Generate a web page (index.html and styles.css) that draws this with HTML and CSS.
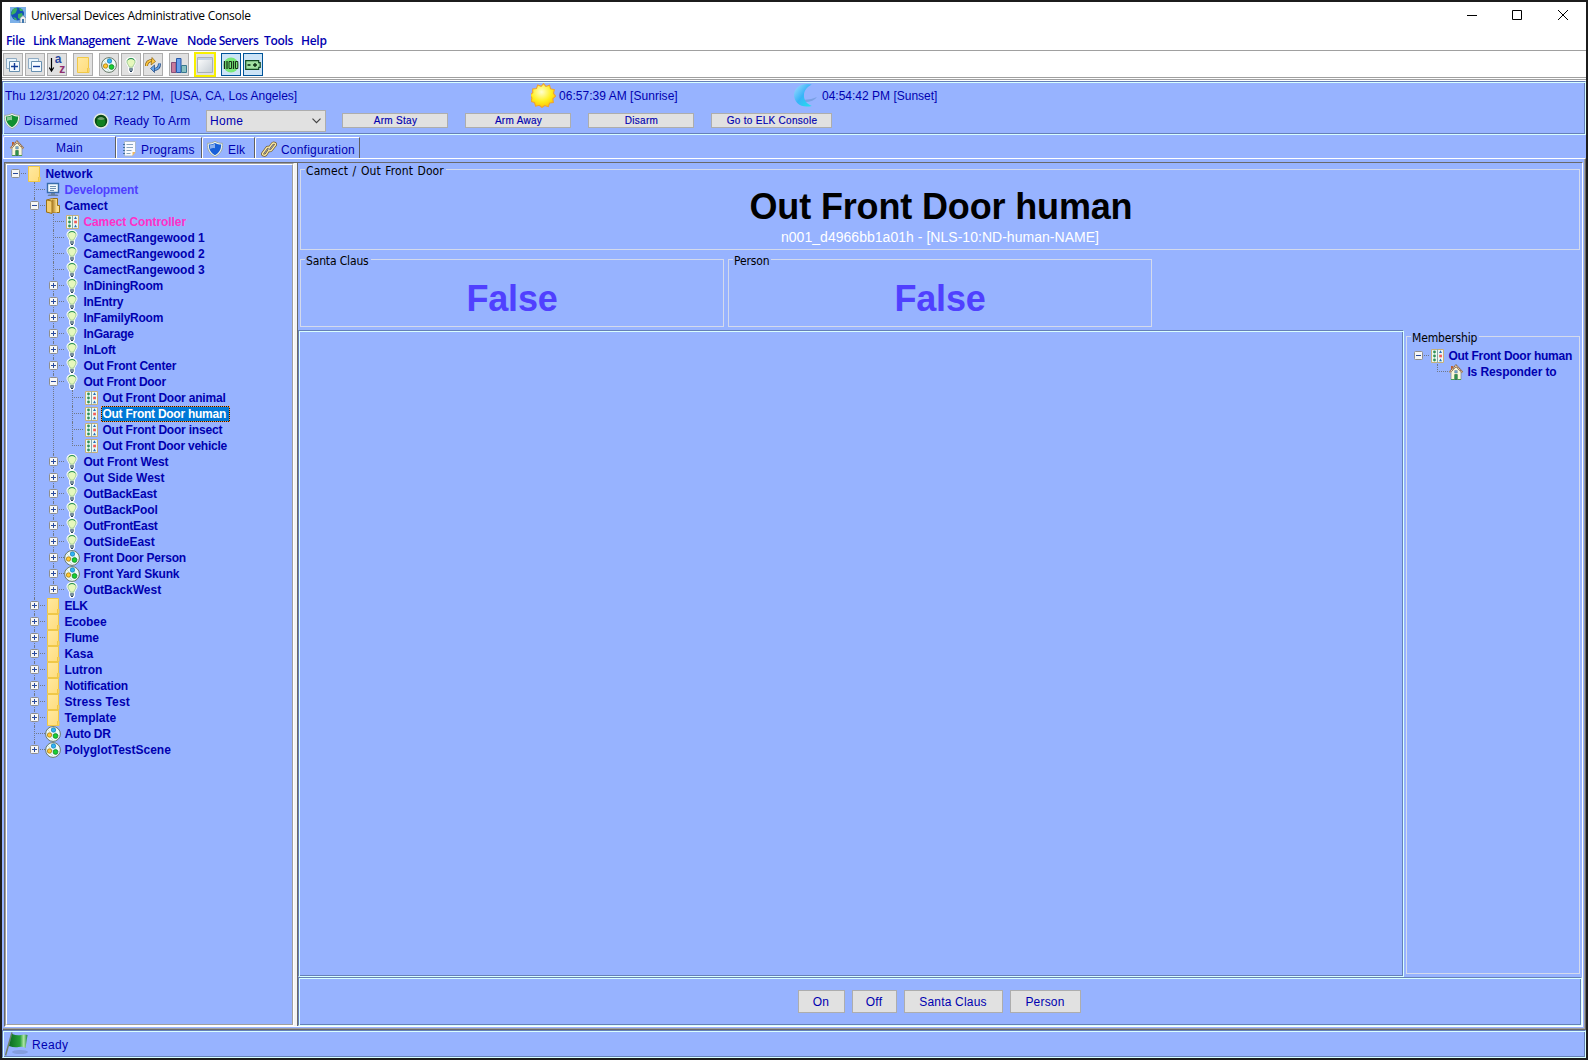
FILE: index.html
```html
<!DOCTYPE html>
<html lang="en">
<head>
<meta charset="utf-8">
<title>Universal Devices Administrative Console</title>
<link rel="stylesheet" href="styles.css">
</head>
<body>
<svg class="defs" aria-hidden="true">
  <defs>
    <linearGradient id="gFolder" x1="0" y1="0" x2="1" y2="1"><stop offset="0" stop-color="#ffe9a0"/><stop offset="1" stop-color="#ffdc7c"/></linearGradient>
    <linearGradient id="gOpen" x1="0" x2="1"><stop offset="0" stop-color="#a87820"/><stop offset="1" stop-color="#ffe494"/></linearGradient>
    <radialGradient id="gSun" cx=".45" cy=".35" r=".65"><stop offset="0" stop-color="#ffffd0"/><stop offset=".6" stop-color="#fff020"/><stop offset="1" stop-color="#ffc400"/></radialGradient>
    <linearGradient id="gMoon" x1="0" y1="0" x2="1" y2="1"><stop offset="0" stop-color="#a8dcff"/><stop offset=".5" stop-color="#38b4f8"/><stop offset="1" stop-color="#20e4ec"/></linearGradient>
    <linearGradient id="gFlag" x1="0" x2="1"><stop offset="0" stop-color="#0c6c24"/><stop offset=".6" stop-color="#28a038"/><stop offset=".8" stop-color="#b0e8a8"/><stop offset="1" stop-color="#188030"/></linearGradient>
    <linearGradient id="gWin" x1="0" y1="0" x2="1" y2="1"><stop offset="0" stop-color="#fff"/><stop offset="1" stop-color="#c4ccd4"/></linearGradient>
  </defs>
  <symbol id="plus" viewBox="0 0 9 9"><rect x=".5" y=".5" width="8" height="8" rx="1" fill="#f6f6f6" stroke="#8e8e8e"/><path d="M2 4.500h5M4.500 2v5" stroke="#2a4a9c"/></symbol>
  <symbol id="minus" viewBox="0 0 9 9"><rect x=".5" y=".5" width="8" height="8" rx="1" fill="#f6f6f6" stroke="#8e8e8e"/><path d="M2 4.500h5" stroke="#2a4a9c"/></symbol>
  <symbol id="folder" viewBox="0 0 16 16"><path d="M2.500 .5h11v10.500h.5v4.500h-11.500z" fill="url(#gFolder)" stroke="#f0c848"/><path d="M12.500 11v4" stroke="#f0c848"/></symbol>
  <symbol id="openfolder" viewBox="0 0 16 16"><path d="M1.500 2l6-1.500h5v7h2v7h-7l-6-.5z" fill="#ffe08c" stroke="#987018"/><path d="M1.500 2l5.500 1v12.500l-5.500-1.500z" fill="#f4cc70" stroke="#987018"/><path d="M7 1.500h5v13h-5z" fill="url(#gOpen)"/></symbol>
  <symbol id="bulb" viewBox="0 0 16 16"><path d="M8 0c-3.400 0-5.500 2.100-5.500 4.800 0 2.200 2.200 3.500 2.600 5.700v3.500l1.300 2h3.200l1.300-2v-3.500c.4-2.200 2.600-3.500 2.600-5.700 0-2.700-2.100-4.800-5.500-4.800z" fill="#fff"/><path d="M8 1.300c-2.500 0-4.100 1.500-4.100 3.700 0 1.800 2 3.100 2.400 5.200h3.400c.4-2.100 2.400-3.400 2.400-5.200 0-2.200-1.600-3.700-4.100-3.700z" fill="#e6f8bc" stroke="#88ba88" stroke-width=".8"/><path d="M4.600 3.300c1.400-2.200 5.400-2.400 6.800 0" stroke="#209050" fill="none"/><path d="M6.500 11.500h3v2h-3z" fill="#7894a4" stroke="#587080" stroke-width=".7"/><path d="M7 14.500h2" stroke="#284060"/></symbol>
  <symbol id="scene" viewBox="0 0 16 16"><circle cx="8" cy="8" r="7.400" fill="#eefaf6" stroke="#687868"/><path d="M3 4l9 9M1 7l7 7M6 2l8 8" stroke="#b8d4d4" stroke-width=".7"/><circle cx="8.500" cy="4" r="2.200" fill="#30b4f4" stroke="#1078b8" stroke-width=".7"/><circle cx="4.500" cy="9" r="2.200" fill="#ffc830" stroke="#a87000" stroke-width=".7"/><circle cx="10.500" cy="10" r="2.400" fill="#18d030" stroke="#087820" stroke-width=".7"/></symbol>
  <symbol id="device" viewBox="0 0 16 16"><path d="M2.500 1.500h12v13h-12z" fill="#eefaf4" stroke="#c8b078"/><path d="M8.500 1v14" stroke="#8ca8a8"/><g fill="#309058"><circle cx="5.500" cy="4" r="1.400"/><circle cx="5.500" cy="8" r="1.400"/><circle cx="5.500" cy="12" r="1.400"/></g><path d="M10 5l1.500-2.700 1.500 2.700zM10 13.300l1.500-2.700 1.500 2.700z" fill="#2870b8"/><path d="M10.200 6.700h2.700v2.600h-2.700z" fill="#f05858"/></symbol>
  <symbol id="pc" viewBox="0 0 16 16"><path d="M2.500 1.500h11v9h-11z" fill="#f0f8fc" stroke="#386cac" stroke-width="1.400"/><path d="M5 4.500h6M5 6.500h6M5 8.500h4" stroke="#7090b0"/><path d="M6 11h4v1.500h2.500l1 1.500h-11l1-1.500h2.500z" fill="#6880a0"/></symbol>
  <symbol id="house" viewBox="0 0 16 16"><path d="M3 2h2v4h-2z" fill="#c06030"/><path d="M3 8l5-5 5 5v7.500h-10z" fill="#fbf8d8" stroke="#889098" stroke-width=".8"/><path d="M1.500 8.500l6.500-7 6.500 7" fill="none" stroke="#886850" stroke-width="1.900"/><path d="M1.700 8.500l6.300-6.700 6.300 6.700" fill="none" stroke="#f8dcb0" stroke-width="1.100" stroke-dasharray="1.200 .8"/><path d="M6.700 6.500h2.600v2.500h-2.600z" fill="#70a8d0" stroke="#688098" stroke-width=".5"/><path d="M6.700 10.500h2.600v5h-2.600z" fill="#309850" stroke="#206038" stroke-width=".6"/><path d="M3 15.500h3M10 15.500h3" stroke="#48a050"/></symbol>
  <symbol id="shield" viewBox="1 0 14 16" preserveAspectRatio="none"><path d="M8 .3c2 1.400 4.200 2 6.700 2 .3 6.200-1.700 10.500-6.700 13.400-5-2.900-7-7.200-6.700-13.400 2.500 0 4.700-.6 6.700-2z" fill="#f0f4f0" stroke="#94a498" stroke-width=".8"/><path d="M8 1.900c1.800 1.100 3.500 1.600 5.400 1.700 0 5.100-1.600 8.200-5.400 10.700-3.800-2.500-5.400-5.600-5.400-10.700 1.900-.1 3.600-.6 5.400-1.700z" fill="currentColor"/><path d="M3.300 4.200c2-.2 3.500-.7 4.700-1.500v4.600c-1.700-.5-2.800-.2-4.200.7z" fill="#fff" opacity=".5"/></symbol>
  <symbol id="doc" viewBox="0 0 16 16"><path d="M3.500 .5h11v10l-3 4.500h-8z" fill="#f8faff" stroke="#a8b8cc"/><path d="M11.500 15v-4h3z" fill="#f0b860"/><path d="M2 3.500h2M2 6.500h2M2 9.500h2M2 12.500h2" stroke="#4070a0"/><path d="M5.500 3.500h6.500M5.500 6.500h6.500M5.500 9.500h5M5.500 12.500h4" stroke="#88a4c0"/></symbol>
  <symbol id="link" viewBox="0 0 16 16"><g fill="none"><path d="M8 7l3-4c1-1.400 4-1.500 3.500 1l-4 5c-1 1.300-3 1-3-.5M8 9l-3 4.500c-1 1.200-4 1-3.500-1l4-5.500c1-1.300 3-1 3 .5" stroke="#705828" stroke-width="2.800"/><path d="M8 7l3-4c1-1.400 4-1.500 3.500 1l-4 5c-1 1.300-3 1-3-.5M8 9l-3 4.500c-1 1.200-4 1-3.500-1l4-5.500c1-1.300 3-1 3 .5" stroke="#f8eaa8" stroke-width="1.300"/></g></symbol>
</svg>

<div class="window">
  <header class="titlebar">
    <svg class="logo" viewBox="0 0 16 16"><path d="M0 0h16v16h-16z" fill="#7cb0e8"/><circle cx="7.500" cy="7" r="6.500" fill="#1450b4"/><path d="M3 2c3-2 5-1 4 1s-1 3-3 4-2 1-3 0zM8 7l4-1 1 3-3 3-2-1zM9 1l3 1 1 2h-3zM3 10l3 1 1 2-2 0z" fill="#38b060"/><path d="M10 15v-4l3-2.500 3 2.500v5h-6z" fill="#f0f0f0" stroke="#6888a8" stroke-width=".8"/><path d="M12 12h2v4h-2z" fill="#4078b0"/></svg>
    <h1 class="caption">Universal Devices Administrative Console</h1>
    <svg class="winbuttons" viewBox="0 0 110 16"><g fill="none" stroke="#000"><path d="M5 8.500h10M50.500 3.500h9v9h-9z"/><path d="M96 3l10 10M106 3l-10 10"/></g></svg>
  </header>
  <nav class="menubar"><span class="m1">File</span><span class="m2">Link Management</span><span class="m3">Z-Wave</span><span class="m4">Node Servers</span><span class="m5">Tools</span><span class="m6">Help</span></nav>
  <div class="toolbar">
    <button class="tool"><svg viewBox="0 0 16 16"><path d="M1.500 1.500h10v10h-10z" fill="#e8f4fc" stroke="#90acc4"/><path d="M4.500 4.500h10v10h-10z" fill="#f4faff" stroke="#6890b0"/><path d="M6 9.500h7M9.500 6v7" stroke="#103c98" stroke-width="1.400"/></svg></button>
    <button class="tool"><svg viewBox="0 0 16 16"><path d="M1.500 1.500h10v10h-10z" fill="#e8f4fc" stroke="#90acc4"/><path d="M4.500 4.500h10v10h-10z" fill="#f4faff" stroke="#6890b0"/><path d="M6 9.500h7" stroke="#103c98" stroke-width="1.400"/></svg></button>
    <button class="tool sort"><svg class="arrow" viewBox="0 0 6 16"><path d="M2.500 1v12M.3 10.500l2.200 3.500 2.200-3.500" fill="none" stroke="#000" stroke-width="1.200"/></svg><b class="a">a</b><b class="z">z</b></button>
    <button class="tool start"><svg viewBox="0 0 16 16"><use href="#folder"/></svg></button>
    <button class="tool start"><svg viewBox="0 0 16 16"><use href="#scene"/></svg></button>
    <button class="tool"><svg viewBox="0 0 16 16"><use href="#bulb"/></svg></button>
    <button class="tool"><svg viewBox="0 0 16 16"><g fill="none"><path d="M1.500 9c0-4 2-5.500 6-5.500" stroke="#886010" stroke-width="3"/><path d="M1.500 9c0-4 2-5.500 6-5.500" stroke="#ffc840" stroke-width="1.600"/><path d="M14.500 6.500c0 4-2 6-6 6" stroke="#204880" stroke-width="3"/><path d="M14.500 6.500c0 4-2 6-6 6" stroke="#68a4e8" stroke-width="1.600"/></g><path d="M7 .5l3.500 4-4.500 3.500z" fill="#ffc840" stroke="#886010" stroke-width=".7"/><path d="M9.500 8l-4 3.500 4 4z" fill="#68a4e8" stroke="#204880" stroke-width=".7"/></svg></button>
    <button class="tool start"><svg viewBox="0 0 16 16"><path d="M.5 5.500h4.500v10h-4.500z" fill="#c87c9c" stroke="#885078"/><path d="M5.500 1.500h4.500v14h-4.500z" fill="#68a0ec" stroke="#2858a8"/><path d="M10.500 8.500h5v7h-5z" fill="#88c0c0" stroke="#387890"/></svg></button>
    <button class="tool marked"><svg viewBox="0 0 16 16"><path d="M.5 .5h15v15h-15z" fill="url(#gWin)" stroke="#a8b0b8"/><path d="M1 2h14" stroke="#c0d0e4" stroke-width="2"/></svg></button>
    <button class="tool on first"><svg viewBox="0 0 16 16"><circle cx="8" cy="8" r="7.500" fill="#78e878"/><path d="M1.500 4v8M4 4v8M10.500 4v8" stroke="#183018" stroke-width="1.300"/><path d="M6 4.500h2.500v7h-2.500zM12.500 4.500h2.300v7h-2.300z" fill="none" stroke="#183018"/></svg></button>
    <button class="tool on"><svg viewBox="0 0 16 16"><path d="M.7 3.700h13v2h1.500v4.600h-1.500v2h-13z" fill="#a0e0a0" stroke="#104820" stroke-width="1.200"/><path d="M2.500 8h3M8 8h4M10 6v4" stroke="#082810" stroke-width="1.300"/></svg></button>
  </div>

  <section class="status etched">
    <div class="times">
      <span class="clock">Thu 12/31/2020 04:27:12 PM,&nbsp; [USA, CA, Los Angeles]</span>
      <svg class="sun" viewBox="0 0 24 24"><path d="M12 .6l2.300 2.700 3.500-1.200 1 3.500 3.600.7-.8 3.600 2 2.700-2.600 2.400.4 3.700-3.600.6-1.200 3.400-3.500-1.100-2.600 1.900-2.500-2.100-3.600.9-1-3.500-3.500-1 1-3.400-1.900-2.900 2.700-2.200-.1-3.600 3.600-.5 1.300-3.300 3.200 1.300z" fill="url(#gSun)" stroke="#f0a030"/></svg>
      <span class="sunrise">06:57:39 AM [Sunrise]</span>
      <svg class="moon" viewBox="0 0 24 24"><path d="M10 16q7 .5 13-2.500-3 4.500-12 5z" fill="#6c98d8" opacity=".7"/><path d="M18 1.500c-9-2.500-17 2.500-17 10 0 7.500 7 13 17 10.500-5-2-7.500-5.500-7.500-10s3-8.500 7.500-10.500z" fill="url(#gMoon)"/></svg>
      <span>04:54:42 PM [Sunset]</span>
    </div>
    <div class="arming">
      <svg class="i16 green" viewBox="0 0 16 16"><use href="#shield"/></svg><span class="disarmed">Disarmed</span>
      <svg class="i16" viewBox="0 0 16 16"><circle cx="8" cy="8" r="7" fill="#0a4a14" stroke="#e4ece0" stroke-width="1.500"/><circle cx="8" cy="9" r="4.500" fill="#108020"/><path d="M4 6q4-4 8 0-4 2-8 0" fill="#70a070"/></svg><span class="ready">Ready To Arm</span>
      <div class="select"><span>Home</span><svg viewBox="0 0 9 6"><path d="M.5 .7l4 4 4-4" fill="none" stroke="#444" stroke-width="1.200"/></svg></div>
      <button class="small">Arm Stay</button><button class="small">Arm Away</button><button class="small">Disarm</button><button class="small wide">Go to ELK Console</button>
    </div>
  </section>

  <nav class="tabs">
    <div class="tab active"><svg class="i16" viewBox="0 0 16 16"><use href="#house"/></svg><span>Main</span></div>
    <div class="tab programs"><svg class="i16" viewBox="0 0 16 16"><use href="#doc"/></svg><span>Programs</span></div>
    <div class="tab elk"><svg class="i16 blue" viewBox="0 0 16 16"><use href="#shield"/></svg><span>Elk</span></div>
    <div class="tab config"><svg class="i16" viewBox="0 0 16 16"><use href="#link"/></svg><span>Configuration</span></div>
  </nav>

  <main class="page"><div class="pane">
    <aside class="treebox"><div class="treeinner">
      <ul class="tree">
        <li><div class="row"><svg class="x"><use href="#minus"/></svg><svg class="i"><use href="#folder"/></svg><span>Network</span></div>
        <ul>
          <li><div class="row"><i class="x"></i><svg class="i"><use href="#pc"/></svg><span class="violet">Development</span></div></li>
          <li><div class="row"><svg class="x"><use href="#minus"/></svg><svg class="i"><use href="#openfolder"/></svg><span>Camect</span></div>
          <ul>
            <li><div class="row"><i class="x"></i><svg class="i"><use href="#device"/></svg><span class="pink">Camect Controller</span></div></li>
            <li><div class="row"><i class="x"></i><svg class="i"><use href="#bulb"/></svg><span>CamectRangewood 1</span></div></li>
            <li><div class="row"><i class="x"></i><svg class="i"><use href="#bulb"/></svg><span>CamectRangewood 2</span></div></li>
            <li><div class="row"><i class="x"></i><svg class="i"><use href="#bulb"/></svg><span>CamectRangewood 3</span></div></li>
            <li><div class="row"><svg class="x"><use href="#plus"/></svg><svg class="i"><use href="#bulb"/></svg><span class="tight">InDiningRoom</span></div></li>
            <li><div class="row"><svg class="x"><use href="#plus"/></svg><svg class="i"><use href="#bulb"/></svg><span class="tight">InEntry</span></div></li>
            <li><div class="row"><svg class="x"><use href="#plus"/></svg><svg class="i"><use href="#bulb"/></svg><span class="tighter">InFamilyRoom</span></div></li>
            <li><div class="row"><svg class="x"><use href="#plus"/></svg><svg class="i"><use href="#bulb"/></svg><span class="tight">InGarage</span></div></li>
            <li><div class="row"><svg class="x"><use href="#plus"/></svg><svg class="i"><use href="#bulb"/></svg><span class="tight">InLoft</span></div></li>
            <li><div class="row"><svg class="x"><use href="#plus"/></svg><svg class="i"><use href="#bulb"/></svg><span class="tight">Out Front Center</span></div></li>
            <li><div class="row"><svg class="x"><use href="#minus"/></svg><svg class="i"><use href="#bulb"/></svg><span class="tighter">Out Front Door</span></div>
            <ul>
              <li><div class="row"><i class="x"></i><svg class="i"><use href="#device"/></svg><span class="tight">Out Front Door animal</span></div></li>
              <li><div class="row"><i class="x"></i><svg class="i"><use href="#device"/></svg><span class="tighter selected">Out Front Door human</span></div></li>
              <li><div class="row"><i class="x"></i><svg class="i"><use href="#device"/></svg><span class="tight">Out Front Door insect</span></div></li>
              <li><div class="row"><i class="x"></i><svg class="i"><use href="#device"/></svg><span class="tighter">Out Front Door vehicle</span></div></li>
            </ul></li>
            <li><div class="row"><svg class="x"><use href="#plus"/></svg><svg class="i"><use href="#bulb"/></svg><span class="snug">Out Front West</span></div></li>
            <li><div class="row"><svg class="x"><use href="#plus"/></svg><svg class="i"><use href="#bulb"/></svg><span>Out Side West</span></div></li>
            <li><div class="row"><svg class="x"><use href="#plus"/></svg><svg class="i"><use href="#bulb"/></svg><span class="snug">OutBackEast</span></div></li>
            <li><div class="row"><svg class="x"><use href="#plus"/></svg><svg class="i"><use href="#bulb"/></svg><span class="snug">OutBackPool</span></div></li>
            <li><div class="row"><svg class="x"><use href="#plus"/></svg><svg class="i"><use href="#bulb"/></svg><span class="tight">OutFrontEast</span></div></li>
            <li><div class="row"><svg class="x"><use href="#plus"/></svg><svg class="i"><use href="#bulb"/></svg><span>OutSideEast</span></div></li>
            <li><div class="row"><svg class="x"><use href="#plus"/></svg><svg class="i"><use href="#scene"/></svg><span class="tight">Front Door Person</span></div></li>
            <li><div class="row"><svg class="x"><use href="#plus"/></svg><svg class="i"><use href="#scene"/></svg><span class="tight">Front Yard Skunk</span></div></li>
            <li><div class="row"><svg class="x"><use href="#plus"/></svg><svg class="i"><use href="#bulb"/></svg><span>OutBackWest</span></div></li>
          </ul></li>
          <li><div class="row"><svg class="x"><use href="#plus"/></svg><svg class="i"><use href="#folder"/></svg><span class="tight">ELK</span></div></li>
          <li><div class="row"><svg class="x"><use href="#plus"/></svg><svg class="i"><use href="#folder"/></svg><span class="snug">Ecobee</span></div></li>
          <li><div class="row"><svg class="x"><use href="#plus"/></svg><svg class="i"><use href="#folder"/></svg><span class="tight">Flume</span></div></li>
          <li><div class="row"><svg class="x"><use href="#plus"/></svg><svg class="i"><use href="#folder"/></svg><span>Kasa</span></div></li>
          <li><div class="row"><svg class="x"><use href="#plus"/></svg><svg class="i"><use href="#folder"/></svg><span>Lutron</span></div></li>
          <li><div class="row"><svg class="x"><use href="#plus"/></svg><svg class="i"><use href="#folder"/></svg><span class="tight">Notification</span></div></li>
          <li><div class="row"><svg class="x"><use href="#plus"/></svg><svg class="i"><use href="#folder"/></svg><span class="loose">Stress Test</span></div></li>
          <li><div class="row"><svg class="x"><use href="#plus"/></svg><svg class="i"><use href="#folder"/></svg><span>Template</span></div></li>
          <li><div class="row"><i class="x"></i><svg class="i"><use href="#scene"/></svg><span class="tighter">Auto DR</span></div></li>
          <li><div class="row"><svg class="x"><use href="#plus"/></svg><svg class="i"><use href="#scene"/></svg><span>PolyglotTestScene</span></div></li>
        </ul></li>
      </ul>
    </div></aside>
    <div class="divider"></div>
    <section class="detail">
      <div class="group device"><span class="legend spaced">Camect / Out Front Door</span>
        <h2>Out Front Door human</h2>
        <p>n001_d4966bb1a01h - [NLS-10:ND-human-NAME]</p>
      </div>
      <div class="values">
        <div class="group value"><span class="legend">Santa Claus</span>False</div>
        <div class="group value"><span class="legend">Person</span>False</div>
      </div>
      <div class="middle">
        <div class="canvas etched"></div>
        <div class="group membership"><span class="legend">Membership</span>
          <ul class="tree">
            <li><div class="row"><svg class="x"><use href="#minus"/></svg><svg class="i"><use href="#device"/></svg><span class="tighter">Out Front Door human</span></div>
              <ul><li><div class="row"><i class="x"></i><svg class="i"><use href="#house"/></svg><span class="snug">Is Responder to</span></div></li></ul></li>
          </ul>
        </div>
      </div>
      <div class="commands etched"><button class="b1">On</button><button class="b2">Off</button><button class="b3">Santa Claus</button><button class="b4">Person</button></div>
    </section>
  </div></main>

  <footer class="footer etched"><svg viewBox="0 0 24 24"><ellipse cx="15" cy="20" rx="8" ry="2" fill="#7890c8" opacity=".6"/><path d="M7 .5l-6.500 23" stroke="#708068" stroke-width="1.500"/><path d="M7 2q5 2 9 1t6.500 0l-2 13q-3-2-7-1t-9.500-1z" fill="url(#gFlag)"/></svg><span>Ready</span></footer>
</div>
</body>
</html>
```
FILE: styles.css
```css
* { box-sizing: border-box; }
html, body { margin: 0; height: 100%; }
body {
  background: #1c1c1c;
  padding: 2px;
  width: 1588px;
  height: 1060px;
  overflow: hidden;
  font: 12px/16px "Liberation Sans", Arial, sans-serif;
  color: #0000b0;
}
.defs { position: absolute; width: 0; height: 0; }
svg { display: block; flex: none; }
span, button { white-space: nowrap; }
button {
  font: inherit;
  color: inherit;
  padding: 0;
  border: 1px solid #adadad;
  border-radius: 0;
  background: #e1e1e1;
  flex: none;
}
h1, h2, p { margin: 0; }
.window { width: 1584px; height: 1056px; display: flex; flex-direction: column; background: #97b3ff; }
.i16 { width: 16px; height: 16px; }
.green { color: #109030; }
.blue { color: #1860d8; }
/* two-tone engraved frame */
.etched { border: 1px solid #6680b8; border-right-color: #d8ffff; border-bottom-color: #d8ffff; box-shadow: inset 1px 1px #d8ffff, inset -1px -1px #6680b8; }

.titlebar { height: 27px; flex: none; background: #fff; display: flex; align-items: center; padding-left: 8px; }
.logo { width: 16px; height: 16px; margin-top: -1px; }
.caption { font: 12px/16px "Open Sans", sans-serif; color: #000; margin-left: 5px; flex: 1; letter-spacing: -.26px; }
.winbuttons { width: 110px; height: 16px; margin: -2px 14px 0 0; }
.menubar { height: 21px; flex: none; background: #fff; display: flex; align-items: center; padding: 2px 0 0 4px; font: 600 12px/16px "Open Sans", sans-serif; letter-spacing: -.5px; }
.menubar span { flex: none; }
.m1 { width: 27px; } .m2 { width: 104px; } .m3 { width: 50px; } .m4 { width: 77px; } .m5 { width: 37px; }
.m1, .m3, .m5, .m6 { letter-spacing: -.3px; }
.toolbar { height: 31px; flex: none; background: #fff; border-top: 1px solid #a0a0a0; display: flex; gap: 2px; padding: 2px 0 0 1px; box-shadow: inset 0 -1px #fff, inset 0 -2px #a0a0a0, inset 0 -3px #fff, inset 0 -4px #a0a0a0; }
.tool { width: 20px; height: 23px; display: flex; align-items: center; justify-content: center; }
.tool svg { width: 16px; height: 16px; }
.tool.start { margin-left: 4px; }
.tool.marked { width: 22px; height: 25px; margin: -1px 3px 0; border: 1px solid #f8f000; box-shadow: inset 0 0 0 1px #f8f000; }
.tool.on { border-color: #005499; background: #cce4f7; }
.sort { font: bold 12px/10px "Liberation Sans", sans-serif; color: #2848a0; }
.tool.sort .arrow { width: 6px; }
.sort .a { margin-bottom: 11px; }
.sort .z { color: #903070; margin: 9px 0 0 -2px; }

.status { height: 54px; flex: none; padding-left: 2px; }
.times { display: flex; height: 26px; align-items: center; }
.times span { padding-top: 1px; }
.clock { width: 526px; }
.sun, .moon { width: 25px; height: 25px; }
.sunrise { width: 234px; margin-left: 3px; letter-spacing: .03px; }
.moon { margin-right: 4px; }
.arming { display: flex; height: 25px; align-items: center; }
.disarmed { width: 70px; margin-left: 4px; letter-spacing: .35px; }
.ready { width: 92px; margin-left: 5px; letter-spacing: .1px; }
.arming .i16 { margin-left: -1px; }
.select { width: 120px; height: 22px; border: 1px solid #adadad; background: #e1e1e1; display: flex; align-items: center; justify-content: space-between; padding: 0 4px 0 3px; letter-spacing: .3px; margin-right: -1px; }
.select svg { width: 9px; height: 6px; }
.small { width: 106px; height: 15px; font-size: 10px; line-height: 13px; padding: 0 0 0 1px; letter-spacing: .3px; -webkit-text-stroke: .15px #0000b0; margin-left: 17px; }
.wide { width: 121px; }

.tabs { height: 23px; flex: none; display: flex; align-items: flex-end; padding-left: 1px; }
.tab { height: 21px; display: flex; align-items: center; border-top: 1px solid #fff; border-left: 1px solid #fff; border-right: 1px solid #606060; border-top-left-radius: 2px; letter-spacing: .2px; padding: 1px 0 0 5px; }
.tab.active { width: 113px; height: 22px; padding: 1px 0 1px 5px; }
.tab.active span { margin-left: 31px; padding-top: 1px; }
.tab span { margin-left: 5px; padding-top: 3px; }
.programs { width: 86px; } .elk { width: 53px; } .config { width: 105px; }
.tab.programs { padding-left: 4px; } .tab.elk { padding-left: 4px; } .tab.config { padding-left: 5px; }
.tab.programs span { margin-left: 4px; }
.tab.config span { margin-left: 4px; }

.page { flex: 1; min-height: 0; padding: 3px 1px 1px 1px; margin-left: 1px; border-top: 1px solid #fff; border-right: 1px solid #696969; border-bottom: 1px solid #696969; box-shadow: inset -1px -1px #a0a0a0; }
.pane { height: 865px; width: 1579px; display: flex; border: 1px solid #696969; border-right-color: #fff; border-bottom-color: #fff; }
.treebox { width: 289px; flex: none; border: 1px solid #a0a0a0; border-right-color: #fff; border-bottom-color: #fff; }
.treeinner { height: 100%; border: 1px solid #fff; border-right-color: #a0a0a0; border-bottom-color: #a0a0a0; padding: 1px 0 0 4px; box-shadow: 1px 0 #fff; }
.divider { width: 4px; flex: none; background: #f4f4f4; border-right: 1px solid #696969; }

.tree, .tree ul { list-style: none; margin: 0; padding: 0; font-weight: bold; }
.tree ul { padding-left: 19px; }
.tree li { position: relative; }
.row { height: 16px; display: flex; align-items: flex-start; position: relative; }
.row::before { content: ""; position: absolute; left: 4px; top: 7px; width: 11px; border-top: 1px dotted #707888; }
.x { width: 9px; height: 9px; margin: 3px 6px 0 0; position: relative; flex: none; }
.i { width: 16px; height: 16px; margin-right: 3.4px; position: relative; }
.row span { height: 16px; line-height: 16px; position: relative; }
.tree ul > li::before { content: ""; position: absolute; left: 4px; top: 0; bottom: 0; border-left: 1px dotted #707888; }
.tree ul > li:last-child::before { bottom: auto; height: 8px; }
.violet { color: #5040ff; letter-spacing: -.15px; }
.pink { color: #ff30c8; letter-spacing: -.08px; }
.tight { letter-spacing: -.2px; }
.tighter { letter-spacing: -.25px; }
.snug { letter-spacing: -.1px; }
.loose { letter-spacing: .15px; }
.row .selected { background: #0078d7; color: #fff; outline: 1px dotted #ff9848; outline-offset: -1px; box-shadow: inset 0 0 0 1px #20180c; padding: 0 4px 0 1px; margin-left: -1px; }

.detail { flex: 1; min-width: 0; display: flex; flex-direction: column; padding: 6px 0 0; }
.group { position: relative; border: 1px solid #d4daec; }
.legend { position: absolute; top: -6px; left: 4px; padding: 0 2px 0 1px; background: #97b3ff; font: 12px/14px "DejaVu Sans Condensed", "DejaVu Sans", sans-serif; color: #000; letter-spacing: -.15px; }
.spaced { letter-spacing: .1px; word-spacing: 1px; }
.device { width: 1280px; height: 81px; margin-left: 2px; text-align: center; flex: none; padding-top: 16px; }
.device h2 { font: bold 36px/41px "Liberation Sans", sans-serif; color: #000; letter-spacing: -.15px; padding-left: 2px; }
.device p { font-size: 14px; line-height: 16px; color: #fff; margin-top: 2px; letter-spacing: .03px; }
.values { display: flex; gap: 4px; margin: 9px 0 3px 2px; flex: none; }
.value { width: 424px; height: 68px; text-align: center; font: bold 36px/41px "Liberation Sans", sans-serif; color: #5040ff; padding: 18px 1px 0 1px; letter-spacing: -.2px; }
.middle { display: flex; flex: 1; min-height: 0; }
.canvas { width: 1106px; flex: none; }
.membership { width: 174px; margin: 6px 0 3px 2px; padding: 11px 0 0 7px; }
.commands { height: 49px; flex: none; display: flex; justify-content: center; padding: 12px 1px 0 0; gap: 8px; }
.commands button { height: 23px; letter-spacing: .2px; padding-right: 1px; }
.b1 { width: 47px; } .b2 { width: 45px; margin-left: -1px; } .b3 { width: 99px; margin-left: -1px; } .b4 { width: 71px; margin-left: -1px; }
.footer { height: 28px; flex: none; display: flex; align-items: center; padding: 0 0 0 2px; }
.footer svg { width: 24px; height: 24px; }
.footer span { margin: 2px 0 0 3px; letter-spacing: .3px; }
```
